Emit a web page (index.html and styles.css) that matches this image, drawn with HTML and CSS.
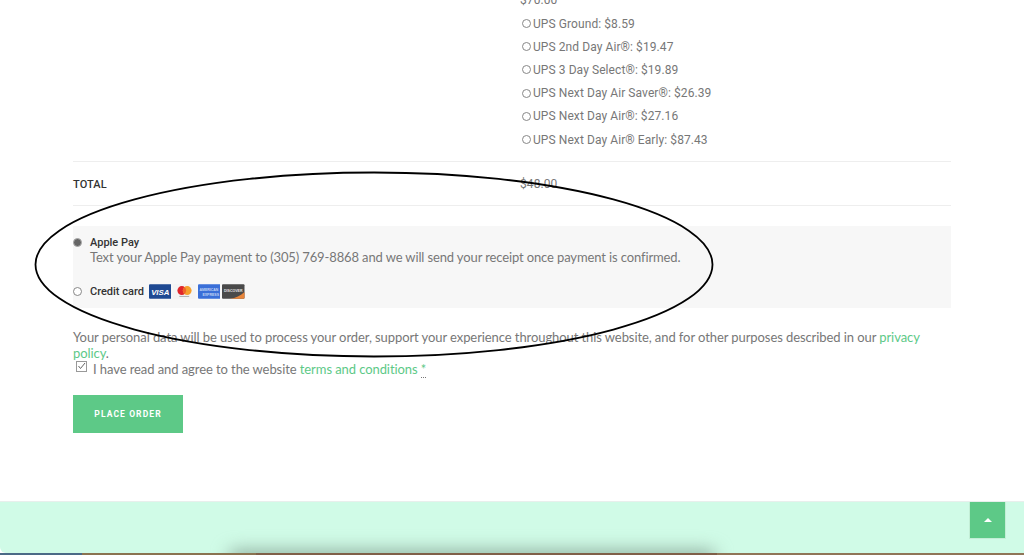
FILE: index.html
```html
<!DOCTYPE html>
<html lang="en">
<head>
    <meta charset="UTF-8">
    <meta name="viewport" content="width=device-width, initial-scale=1.0">
    <title>Checkout</title>
    <link rel="stylesheet" href="styles.css">
</head>
<body>
    <div class="checkout">
        <div class="order-row shipping-row">
            <div class="order-label"></div>
            <div class="order-value">
                <p class="subtotal">$70.00</p>
                <ul class="shipping-list">
                    <li><span class="radio"></span>UPS Ground: $8.59</li>
                    <li><span class="radio"></span>UPS 2nd Day Air®: $19.47</li>
                    <li><span class="radio"></span>UPS 3 Day Select®: $19.89</li>
                    <li><span class="radio"></span>UPS Next Day Air Saver®: $26.39</li>
                    <li><span class="radio"></span>UPS Next Day Air®: $27.16</li>
                    <li><span class="radio"></span>UPS Next Day Air® Early: $87.43</li>
                </ul>
            </div>
        </div>
        <div class="order-row total-row">
            <div class="order-label">TOTAL</div>
            <div class="order-value">$48.00</div>
        </div>

        <div class="payment-box">
            <div class="pay-method">
                <span class="radio radio-big radio-on"></span>
                <span class="pay-name">Apple Pay</span>
            </div>
            <p class="pay-note">Text your Apple Pay payment to (305) 769-8868 and we will send your receipt once payment is confirmed.</p>
            <div class="pay-method pay-card">
                <span class="radio radio-big"></span>
                <span class="pay-name">Credit card</span>
                <svg class="card" viewBox="0 0 23 15"><rect width="23" height="15" rx="1" fill="#1f4a93"/><text x="11.500" y="11" text-anchor="middle" class="card-visa">VISA</text></svg>
                <svg class="card" viewBox="0 0 23 15"><rect width="23" height="15" rx="1" fill="#f4f4f4"/><circle cx="9" cy="6.500" r="4.500" fill="#e0252b"/><circle cx="14.500" cy="6.500" r="4.500" fill="#f5a02c"/><path d="M11.750 3a4.500 4.500 0 0 1 0 7a4.500 4.500 0 0 1 0-7z" fill="#f0642a"/><rect x="6.500" y="12" width="10" height="1" fill="#aaa"/></svg>
                <svg class="card" viewBox="0 0 23 15"><rect width="23" height="15" rx="1" fill="#3a6fd8"/><text x="1.500" y="6.800" class="card-small card-amex">AMERICAN</text><text x="21.500" y="12" text-anchor="end" class="card-small card-amex">EXPRESS</text></svg>
                <svg class="card" viewBox="0 0 23 15"><rect width="23" height="15" rx="1" fill="#4a4a4a"/><path d="M23 8V14a1 1 0 0 1-1 1H8c6-1 11-3 15-7z" fill="#e8853a"/><text x="11.500" y="8" text-anchor="middle" class="card-small">DISCOVER</text></svg>
            </div>
        </div>

        <p class="privacy">Your personal data will be used to process your order, support your experience throughout this website, and for other purposes described in our <a href="#">privacy policy</a>.</p>
        <div class="terms">
            <span class="checkbox"><svg width="9" height="9" viewBox="0 0 9 9"><path d="M1.500 4l2 2.500L8 1" fill="none" stroke="#666" stroke-width="1"/></svg></span>
            <span>I have read and agree to the website <a href="#">terms and conditions</a> <abbr class="req">*</abbr></span>
        </div>
        <button class="place-order">PLACE ORDER</button>
    </div>

    <footer class="footer">
        <div class="footer-shadow"></div>
        <a class="to-top" href="#"><span class="arrow-up"></span></a>
    </footer>
    <div class="desktop-strip"></div>

    <!-- hand drawn circle over the payment block -->
    <svg class="scribble" width="1024" height="555" viewBox="0 0 1024 555">
        <ellipse cx="374" cy="264.500" rx="338.500" ry="92" fill="none" stroke="#000" stroke-width="1.800"/>
    </svg>
</body>
</html>
```

FILE: styles.css
```css
html, body {
    margin: 0;
    height: 555px;
    overflow: hidden;
}
body {
    position: relative;
    background: #fff;
    color: #777;
    font-family: Roboto, sans-serif;
    display: flex;
    flex-direction: column;
}
a {
    color: #5dc987;
    text-decoration: none;
}

.checkout {
    height: 509px;
    box-sizing: border-box;
    margin-top: -8px;
    padding: 0 73px;
    flex: none;
}

.order-row {
    display: grid;
    grid-template-columns: 447px 1fr;
    border-bottom: 1px solid #eee;
    font-size: 12px;
    letter-spacing: 0.08px;
}
.subtotal {
    margin: 0;
    height: 20px;
    line-height: 16px;
}
.shipping-row {
    height: 170px;
    box-sizing: border-box;
}
.shipping-list {
    list-style: none;
    margin: 0;
    padding: 0 0 0 2px;
}
.shipping-list li {
    display: flex;
    align-items: center;
    height: 23.2px;
}
.radio {
    width: 7px;
    height: 7px;
    border: 1px solid #888;
    border-radius: 50%;
    margin-right: 2px;
    flex: none;
    background: #fff;
}
.radio-big {
    margin-right: 8px;
}
.radio-on {
    background: #666;
    border-color: #aaa;
}

.total-row {
    height: 44px;
    box-sizing: border-box;
    align-items: center;
    padding-top: 1px;
}
.total-row .order-label {
    color: #333;
    font-weight: 500;
    font-size: 11px;
}

.payment-box {
    background: #f7f7f7;
    height: 82px;
    margin-top: 20px;
    padding-top: 10px;
    box-sizing: border-box;
}
.pay-method {
    display: flex;
    align-items: center;
    height: 13px;
}
.pay-name {
    color: #333;
    font-size: 11px;
    font-weight: 500;
}
.pay-note {
    margin: 1px 0 0 17px;
    font-family: Lato, sans-serif;
    font-size: 13px;
    letter-spacing: -0.126px;
    line-height: 15px;
}
.pay-card {
    margin-top: 18px;
    height: 16px;
}
.pay-card .pay-name {
    margin-right: 3px;
}
.card {
    width: 22.500px;
    height: 15px;
    margin-left: 2px;
    flex: none;
}
.card-visa {
    fill: #fff;
    font-family: "Liberation Sans", sans-serif;
    font-size: 8px;
    font-weight: 700;
    font-style: italic;
}
.card-small {
    fill: #e6e6e6;
    font-family: "Liberation Sans", sans-serif;
    font-size: 3.600px;
    font-weight: 700;
}
.card-amex {
    fill: #c3d4f3;
}

.privacy {
    margin: 21px 0 0;
    font-family: Lato, sans-serif;
    font-size: 13px;
    letter-spacing: -0.083px;
    line-height: 16px;
}
.terms {
    display: flex;
    align-items: center;
    font-family: Lato, sans-serif;
    font-size: 13px;
    letter-spacing: -0.08px;
    line-height: 16px;
    margin-top: 0;
}
.checkbox {
    width: 9px;
    height: 9px;
    border: 1px solid #999;
    margin: -6px 6px 0 3px;
    display: flex;
    flex: none;
}
.req {
    color: #5dc987;
    border-bottom: 1px dotted #777;
}

.place-order {
    display: block;
    width: 110px;
    height: 38px;
    margin-top: 18px;
    border: none;
    padding: 0;
    background: #5dc987;
    color: #fff;
    font-family: Roboto, sans-serif;
    font-size: 8.500px;
    font-weight: 700;
    letter-spacing: 1.100px;
}

.footer {
    position: relative;
    flex: 1;
    background: #d0fbe7;
    border-top: 1px solid #e8efec;
    border-bottom-left-radius: 6px;
    overflow: hidden;
}
.footer-shadow {
    position: absolute;
    left: 230px;
    right: 310px;
    bottom: -14px;
    height: 16px;
    background: #8aa898;
    filter: blur(9px);
}
.to-top {
    position: absolute;
    top: 0;
    right: 18px;
    width: 35px;
    height: 36px;
    background: #5dc987;
    border: solid #c3eed6;
    border-width: 0 1px 1px;
    display: flex;
    align-items: center;
    justify-content: center;
}
.arrow-up {
    border: 4px solid transparent;
    border-top: 0;
    border-bottom: 4px solid #fff;
}
.desktop-strip {
    height: 2px;
    flex: none;
    background: linear-gradient(90deg, #4b6a86 0 8%, #8a7350 8% 25%, #7f5f48 25% 70%, #8f7557 70%);
}

.scribble {
    position: absolute;
    left: 0;
    top: 0;
    pointer-events: none;
}
```
